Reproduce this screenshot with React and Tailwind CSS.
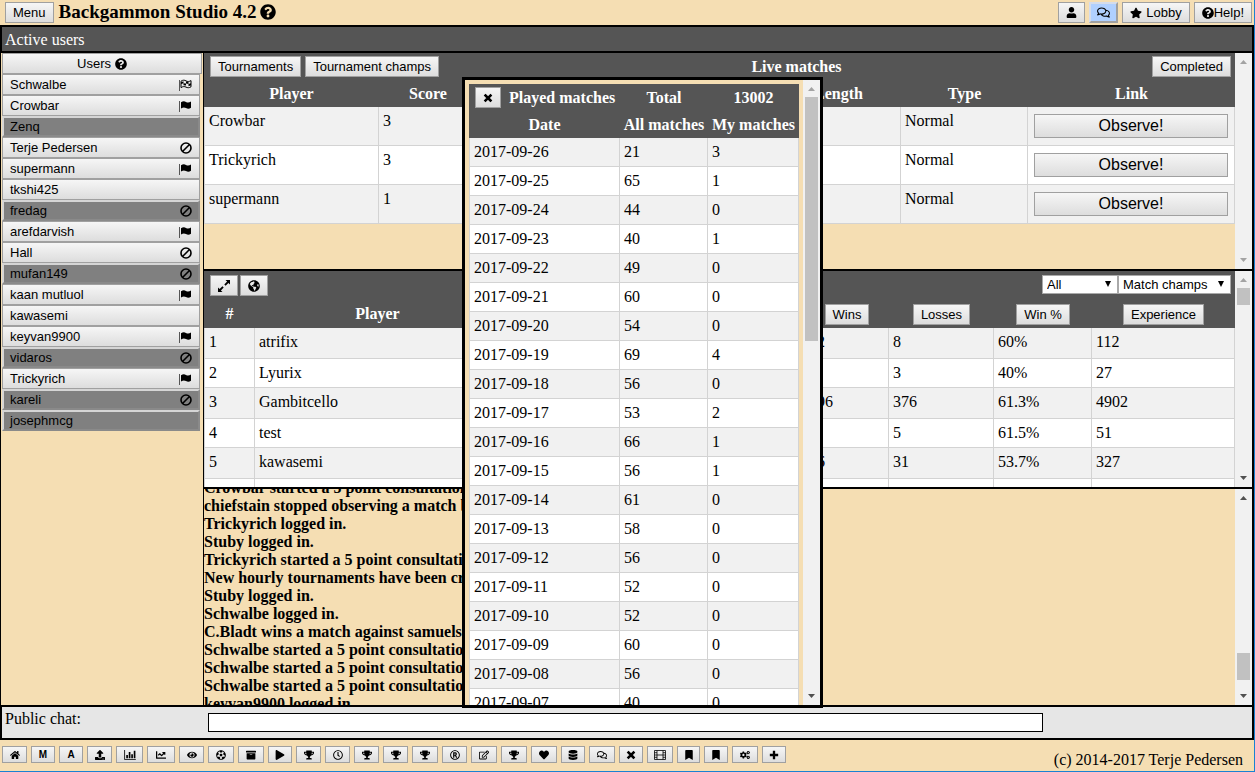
import {
    FaArchive, FaBookmark, FaChartLine, FaCogs, FaDatabase, FaEye, FaFutbol, FaGlobeAmericas,
    FaHeart, FaHome, FaPlay, FaQuestionCircle, FaRegClock, FaRegComments, FaRegEdit,
    FaRegRegistered, FaStar, FaTrophy, FaUpload, FaUser,
} from "react-icons/fa";

const users = [
    { name: "Schwalbe", icon: "flagOutline" },
    { name: "Crowbar", icon: "flag" },
    { name: "Zenq", away: true },
    { name: "Terje Pedersen", icon: "ban" },
    { name: "supermann", icon: "flag" },
    { name: "tkshi425" },
    { name: "fredag", icon: "ban", away: true },
    { name: "arefdarvish", icon: "flag" },
    { name: "Hall", icon: "ban" },
    { name: "mufan149", icon: "ban", away: true },
    { name: "kaan mutluol", icon: "flag" },
    { name: "kawasemi" },
    { name: "keyvan9900", icon: "flag" },
    { name: "vidaros", icon: "ban", away: true },
    { name: "Trickyrich", icon: "flag" },
    { name: "kareli", icon: "ban", away: true },
    { name: "josephmcg", away: true },
];

const liveMatches = [
    { player: "Crowbar", score: 3, type: "Normal" },
    { player: "Trickyrich", score: 3, type: "Normal" },
    { player: "supermann", score: 1, type: "Normal" },
];

const champs = [
    ["1", "atrifix", "12", "8", "60%", "112"],
    ["2", "Lyurix", "2", "3", "40%", "27"],
    ["3", "Gambitcello", "596", "376", "61.3%", "4902"],
    ["4", "test", "8", "5", "61.5%", "51"],
    ["5", "kawasemi", "36", "31", "53.7%", "327"],
    ["", "", "", "", "", ""],
];

const log = [
    "Crowbar started a 5 point consultation",
    "chiefstain stopped observing a match by",
    "Trickyrich logged in.",
    "Stuby logged in.",
    "Trickyrich started a 5 point consultation",
    "New hourly tournaments have been created",
    "Stuby logged in.",
    "Schwalbe logged in.",
    "C.Bladt wins a match against samuels",
    "Schwalbe started a 5 point consultation",
    "Schwalbe started a 5 point consultation",
    "Schwalbe started a 5 point consultation",
    "keyvan9900 logged in.",
];

const played = [
    ["2017-09-26", 21, 3],
    ["2017-09-25", 65, 1],
    ["2017-09-24", 44, 0],
    ["2017-09-23", 40, 1],
    ["2017-09-22", 49, 0],
    ["2017-09-21", 60, 0],
    ["2017-09-20", 54, 0],
    ["2017-09-19", 69, 4],
    ["2017-09-18", 56, 0],
    ["2017-09-17", 53, 2],
    ["2017-09-16", 66, 1],
    ["2017-09-15", 56, 1],
    ["2017-09-14", 61, 0],
    ["2017-09-13", 58, 0],
    ["2017-09-12", 56, 0],
    ["2017-09-11", 52, 0],
    ["2017-09-10", 52, 0],
    ["2017-09-09", 60, 0],
    ["2017-09-08", 56, 0],
    ["2017-09-07", 40, 0],
];

function Flag({ outline }) {
    return (
        <svg viewBox="0 0 14 12" className="w-3.5 h-3" aria-hidden="true">
            <path d="M1.5 1v11" stroke="#555" strokeWidth="1" />
            <path
                d="M3 2.200C5 .8 6.600 1 8 1.900s3.200.8 5-.3v6.200c-1.800 1.200-3.500 1.100-5 .3s-3-.8-5 .5z"
                fill={outline ? "none" : "currentColor"}
                stroke="currentColor"
                strokeWidth={outline ? 1 : 0}
            />
            {outline && <path d="M3 3.200l2.500-1v2l2.500.3v-2L10.500 3v2l2.500-.7v2l-2.500 1v-2.300L8 4.500v2l-2.500-.3v-2L3 5z" fill="currentColor" />}
        </svg>
    );
}

function Ban() {
    return (
        <svg viewBox="0 0 12 12" className="w-3 h-3" fill="none" stroke="currentColor" strokeWidth="1.600" aria-hidden="true">
            <circle cx="6" cy="6" r="5" />
            <path d="M9.500 2.500l-7 7" />
        </svg>
    );
}

function Cross({ className }) {
    return (
        <svg viewBox="0 0 12 12" className={className} aria-hidden="true">
            <path d="M3 3l6 6M9 3l-6 6" stroke="currentColor" strokeWidth="3" strokeLinecap="square" />
        </svg>
    );
}

function Plus({ className }) {
    return (
        <svg viewBox="0 0 12 12" className={className} aria-hidden="true">
            <path d="M6 1v10M1 6h10" stroke="currentColor" strokeWidth="2.800" />
        </svg>
    );
}

function Expand() {
    return (
        <svg viewBox="0 0 12 12" className="w-3 h-3" fill="currentColor" aria-hidden="true">
            <path d="M7.500 0H12v4.500l-1.600-1.600-2.800 2.800-1.300-1.300 2.800-2.800zM4.500 12H0V7.500l1.600 1.600 2.800-2.800 1.300 1.300-2.800 2.800z" />
        </svg>
    );
}

function Bars() {
    return (
        <svg viewBox="0 0 14 12" className="h-2.5 w-3" fill="none" stroke="currentColor" aria-hidden="true">
            <path d="M.5 0v11.500H14" />
            <path d="M3.500 10V6M6.500 10V2.500M9.500 10V5M12.500 10V1" strokeWidth="2" />
        </svg>
    );
}

function Film() {
    return (
        <svg viewBox="0 0 12 10" className="h-2.5 w-3" fill="none" stroke="currentColor" aria-hidden="true">
            <path d="M.5.5h11v9H.5zM3 .5v9M9 .5v9M3 5h6M.5 2.700H3M.5 5H3M.5 7.300H3M9 2.700h2.500M9 5h2.500M9 7.300h2.500" strokeWidth=".8" />
        </svg>
    );
}

const tools = [
    { label: "Home", Icon: FaHome, width: "w-[25px]" },
    { label: "M", width: "w-6" },
    { label: "A", width: "w-6" },
    { label: "Upload", Icon: FaUpload, width: "w-[25px]" },
    { label: "Statistics", Icon: Bars, width: "w-[27px]" },
    { label: "Rating graph", Icon: FaChartLine, width: "w-7" },
    { label: "Watch", Icon: FaEye, width: "w-[25px]" },
    { label: "Football", Icon: FaFutbol, width: "w-[26px]" },
    { label: "Archive", Icon: FaArchive, width: "w-[26px]" },
    { label: "Play", Icon: FaPlay, width: "w-6" },
    { label: "Trophy 1", Icon: FaTrophy, width: "w-[25px]" },
    { label: "Clock", Icon: FaRegClock, width: "w-[25px]" },
    { label: "Trophy 2", Icon: FaTrophy, width: "w-[25px]" },
    { label: "Trophy 3", Icon: FaTrophy, width: "w-[25px]" },
    { label: "Trophy 4", Icon: FaTrophy, width: "w-[26px]" },
    { label: "Registered", Icon: FaRegRegistered, width: "w-[25px]" },
    { label: "Edit", Icon: FaRegEdit, width: "w-[26px]" },
    { label: "Trophy 5", Icon: FaTrophy, width: "w-[26px]" },
    { label: "Favourites", Icon: FaHeart, width: "w-[26px]" },
    { label: "Database", Icon: FaDatabase, width: "w-6" },
    { label: "Comments", Icon: FaRegComments, width: "w-[26px]" },
    { label: "Close", Icon: Cross, width: "w-6" },
    { label: "Film", Icon: Film, width: "w-[26px]" },
    { label: "Bookmark 1", Icon: FaBookmark, width: "w-[23px]" },
    { label: "Bookmark 2", Icon: FaBookmark, width: "w-6" },
    { label: "Settings", Icon: FaCogs, width: "w-[26px]" },
    { label: "Add", Icon: Plus, width: "w-6" },
];

const buttonLook = "border border-[#a0a0a0] bg-linear-to-b from-[#f6f6f6] to-[#dddddd] font-['Liberation_Sans',Arial,sans-serif] text-black";

function Button({ className = "", children, ...props }) {
    return (
        <button
            type="button"
            className={`${buttonLook} inline-flex h-[21px] items-center justify-center px-[7px] align-middle text-[13px] leading-4 font-normal whitespace-nowrap ${className}`}
            {...props}
        >
            {children}
        </button>
    );
}

function Arrow({ down, faint }) {
    return (
        <svg viewBox="0 0 17 17" className={`size-[17px] shrink-0 ${faint ? "text-[#a3a3a3]" : "text-[#505050]"}`} aria-hidden="true">
            <path d={down ? "M5 6h7L8.500 10z" : "M5 11h7L8.500 7z"} fill="currentColor" />
        </svg>
    );
}

function Scrollbar({ thumb, topFaint, bottomFaint }) {
    return (
        <div className="flex w-[17px] shrink-0 flex-col bg-[#f1f1f1]">
            <Arrow faint={topFaint} />
            <div className="min-h-0 flex-1 px-0.5">{thumb && <div className={`bg-[#c1c1c1] ${thumb}`} />}</div>
            <Arrow down faint={bottomFaint} />
        </div>
    );
}

const table = "w-full table-fixed border-separate border-spacing-0";
const cell = "border-r border-b border-[#d3d3d3] px-1 pt-0.5 align-top leading-6 first:border-l";

function LiveMatches() {
    return (
        <section className="flex h-[216px] shrink-0 overflow-hidden">
            <div className="min-w-0 flex-1">
                <div className="grid h-[27px] grid-cols-[1fr_auto_1fr] items-center bg-[#555] pr-1 pl-1.5 text-white">
                    <div className="flex gap-1">
                        <Button>Tournaments</Button>
                        <Button>Tournament champs</Button>
                    </div>
                    <h2 className="ml-38 font-bold">Live matches</h2>
                    <div className="flex justify-end">
                        <Button>Completed</Button>
                    </div>
                </div>
                <table className={table}>
                    <colgroup>
                        <col className="w-[175px]" />
                        <col className="w-[98px]" />
                        <col />
                        <col className="w-[125px]" />
                        <col className="w-[127px]" />
                        <col className="w-[207px]" />
                    </colgroup>
                    <thead>
                        <tr className="h-[27px] bg-[#555] text-white">
                            <th>Player</th>
                            <th>Score</th>
                            <th></th>
                            <th>Length</th>
                            <th>Type</th>
                            <th>Link</th>
                        </tr>
                    </thead>
                    <tbody>
                        {liveMatches.map((m) => (
                            <tr key={m.player} className="h-[39px] odd:bg-[#f1f1f1] even:bg-white">
                                <td className={cell}>{m.player}</td>
                                <td className={cell}>{m.score}</td>
                                <td className={cell}></td>
                                <td className={cell}></td>
                                <td className={cell}>{m.type}</td>
                                <td className="border-r border-b border-[#d3d3d3] px-1.5 align-middle">
                                    <button type="button" className={`${buttonLook} block h-6 w-full text-base leading-5`}>
                                        Observe!
                                    </button>
                                </td>
                            </tr>
                        ))}
                    </tbody>
                </table>
            </div>
            <Scrollbar topFaint bottomFaint />
        </section>
    );
}

function Select({ label, options, className }) {
    return (
        <div className={`relative ${className}`}>
            <select
                aria-label={label}
                className="block h-[19px] w-full appearance-none border border-[#a9a9a9] bg-white pl-1 font-['Liberation_Sans',Arial,sans-serif] text-[13px] leading-4 text-black"
            >
                {options.map((o) => (
                    <option key={o}>{o}</option>
                ))}
            </select>
            <svg viewBox="0 0 8 8" className="pointer-events-none absolute top-1.5 right-1.5 size-2" aria-hidden="true">
                <path d="M1 0h6L4 6z" />
            </svg>
        </div>
    );
}

function Champs() {
    return (
        <section className="flex h-[218px] shrink-0 overflow-hidden border-t-2 border-black">
            <div className="min-w-0 flex-1">
                <div className="flex h-7 items-start justify-between bg-[#555] pt-1 pr-1 pl-1.5">
                    <div className="flex gap-0.5">
                        <Button aria-label="Expand"><Expand /></Button>
                        <Button aria-label="World"><FaGlobeAmericas size={12} /></Button>
                    </div>
                    <div className="flex">
                        <Select label="Period" options={["All"]} className="w-[76px]" />
                        <Select label="List" options={["Match champs"]} className="w-[113px]" />
                    </div>
                </div>
                <table className={table}>
                    <colgroup>
                        <col className="w-[51px]" />
                        <col className="w-[245px]" />
                        <col />
                        <col className="w-[84px]" />
                        <col className="w-[105px]" />
                        <col className="w-[98px]" />
                        <col className="w-[143px]" />
                    </colgroup>
                    <thead>
                        <tr className="h-[29px] bg-[#555] text-white">
                            <th>#</th>
                            <th>Player</th>
                            <th></th>
                            <th><Button>Wins</Button></th>
                            <th><Button>Losses</Button></th>
                            <th><Button>Win %</Button></th>
                            <th><Button>Experience</Button></th>
                        </tr>
                    </thead>
                    <tbody>
                        {champs.map(([rank, player, wins, losses, percent, exp], i) => (
                            <tr key={i} className="odd:h-[31px] even:h-[29px] odd:bg-[#f1f1f1] even:bg-white">
                                <td className={cell}>{rank}</td>
                                <td className={cell}>{player}</td>
                                <td className={cell}></td>
                                <td className={cell}>{wins}</td>
                                <td className={cell}>{losses}</td>
                                <td className={cell}>{percent}</td>
                                <td className={cell}>{exp}</td>
                            </tr>
                        ))}
                    </tbody>
                </table>
            </div>
            <Scrollbar topFaint thumb="h-[17px]" />
        </section>
    );
}

function Log() {
    return (
        <section className="flex min-h-0 flex-1 overflow-hidden border-t-2 border-black">
            <div className="flex min-w-0 flex-1 flex-col overflow-hidden">
                <div className="-mt-2.5 text-base leading-[18px] font-bold">
                    {log.map((line, i) => (
                        <p key={i}>{line}</p>
                    ))}
                </div>
            </div>
            <Scrollbar thumb="mt-[147px] h-[27px]" />
        </section>
    );
}

function PlayedMatches() {
    return (
        <div role="dialog" aria-label="Played matches" className="absolute top-[77px] left-[462px] flex h-[631px] w-[361px] overflow-hidden border-3 border-black bg-[#f5deb3]">
            <div className="min-w-0 flex-1 p-1">
                <table className={table}>
                    <colgroup>
                        <col />
                        <col className="w-[88px]" />
                        <col className="w-[91px]" />
                    </colgroup>
                    <thead className="bg-[#555] text-white">
                        <tr className="h-[27px]">
                            <th>
                                <div className="flex items-center gap-2 pl-1.5">
                                    <Button aria-label="Close"><Cross className="size-2.5" /></Button>
                                    <span className="whitespace-nowrap">Played matches</span>
                                </div>
                            </th>
                            <th>Total</th>
                            <th>13002</th>
                        </tr>
                        <tr className="h-[27px] whitespace-nowrap">
                            <th>Date</th>
                            <th>All matches</th>
                            <th>My matches</th>
                        </tr>
                    </thead>
                    <tbody>
                        {played.map(([date, all, mine]) => (
                            <tr key={date} className="h-[29px] odd:bg-[#f1f1f1] even:bg-white">
                                <td className={cell}>{date}</td>
                                <td className={cell}>{all}</td>
                                <td className={cell}>{mine}</td>
                            </tr>
                        ))}
                    </tbody>
                </table>
            </div>
            <Scrollbar topFaint thumb="h-[244px]" />
        </div>
    );
}

export default function App() {
    return (
        <div className="relative flex h-screen flex-col overflow-hidden border-r border-b border-[#1a82d2] bg-[#f5deb3] font-['Liberation_Serif','Times_New_Roman',serif] text-base text-black">
            <header className="flex h-[25px] shrink-0 items-center justify-between pr-0.5 pl-[5px]">
                <div className="flex items-center gap-[5px]">
                    <Button>Menu</Button>
                    <h1 className="flex items-center gap-1 pb-0.5 text-[19px] leading-5 font-bold">
                        Backgammon Studio 4.2 <FaQuestionCircle size={16} />
                    </h1>
                </div>
                <div className="flex gap-1">
                    <Button aria-label="Profile"><FaUser size={11} /></Button>
                    <button type="button" aria-label="Chat" className="flex h-[21px] w-[29px] items-center justify-center border-2 border-[#a0a0a0] border-t-[#d5dcea] border-l-[#d5dcea] bg-[#b0d0ff]">
                        <FaRegComments size={13} />
                    </button>
                    <Button className="gap-1"><FaStar size={12} />Lobby</Button>
                    <Button><FaQuestionCircle size={12} />Help!</Button>
                </div>
            </header>

            <div className="h-7 shrink-0 border-2 border-black bg-[#555] pl-[3px] leading-[26px] text-white">Active users</div>

            <main className="flex min-h-0 flex-1 border-r-2 border-l border-black">
                <aside className="flex w-[203px] shrink-0 flex-col border-r border-black pl-px">
                    <Button className="w-[200px] shrink-0 gap-1">Users <FaQuestionCircle size={12} /></Button>
                    <ul className="w-[198px]">
                        {users.map((u) => (
                            <li key={u.name} className="h-[21px]">
                                <button
                                    type="button"
                                    className={
                                        u.away
                                            ? "flex h-[21px] w-full items-center justify-between border-2 border-[#8a8a8a] border-t-[#d5d5d5] border-l-[#d5d5d5] bg-[#808080] px-1.5 font-['Liberation_Sans',Arial,sans-serif] text-[13px] leading-4 text-black"
                                            : `${buttonLook} flex h-[21px] w-full items-center justify-between px-[7px] text-[13px] leading-4`
                                    }
                                >
                                    {u.name}
                                    {u.icon === "ban" && <Ban />}
                                    {u.icon === "flag" && <Flag />}
                                    {u.icon === "flagOutline" && <Flag outline />}
                                </button>
                            </li>
                        ))}
                    </ul>
                </aside>
                <div className="flex min-w-0 flex-1 flex-col">
                    <LiveMatches />
                    <Champs />
                    <Log />
                </div>
            </main>

            <div className="flex h-[35px] shrink-0 border-2 border-black bg-[#e6e6e6] pl-[3px]">
                <label htmlFor="chat" className="w-[203px] shrink-0 leading-6">Public chat:</label>
                <input id="chat" type="text" className="mt-1.5 h-[19px] w-[67%] border border-black bg-white px-1 text-sm" />
            </div>

            <footer className="flex h-[31px] shrink-0 items-start justify-between pt-1.5 pr-[11px] pl-0.5">
                <div className="flex gap-1">
                    {tools.map(({ label, Icon, width }) => (
                        <button
                            key={label}
                            type="button"
                            aria-label={label}
                            className={`${buttonLook} ${width} flex h-[17px] items-center justify-center text-[10px] leading-3 font-bold`}
                        >
                            {Icon ? <Icon className="size-2.5" /> : label}
                        </button>
                    ))}
                </div>
                <p className="pt-1.5 leading-4">(c) 2014-2017 Terje Pedersen</p>
            </footer>

            <PlayedMatches />
        </div>
    );
}
